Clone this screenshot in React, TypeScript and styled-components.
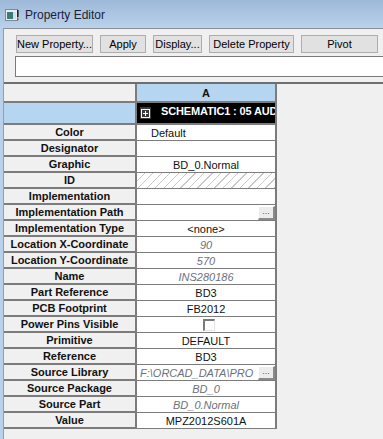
import React from "react";
import styled, { createGlobalStyle } from "styled-components";

const GlobalStyle = createGlobalStyle`
  html, body {
    margin: 0;
    padding: 0;
    background: #f0f0f0;
  }
  * {
    box-sizing: border-box;
  }
`;

type Kind = "left" | "center" | "italic" | "hatch" | "browse" | "check" | "path";

const rows: { label: string; value?: string; kind: Kind }[] = [
  { label: "Color", value: "Default", kind: "left" },
  { label: "Designator", kind: "center" },
  { label: "Graphic", value: "BD_0.Normal", kind: "center" },
  { label: "ID", kind: "hatch" },
  { label: "Implementation", kind: "center" },
  { label: "Implementation Path", kind: "browse" },
  { label: "Implementation Type", value: "<none>", kind: "center" },
  { label: "Location X-Coordinate", value: "90", kind: "italic" },
  { label: "Location Y-Coordinate", value: "570", kind: "italic" },
  { label: "Name", value: "INS280186", kind: "italic" },
  { label: "Part Reference", value: "BD3", kind: "center" },
  { label: "PCB Footprint", value: "FB2012", kind: "center" },
  { label: "Power Pins Visible", kind: "check" },
  { label: "Primitive", value: "DEFAULT", kind: "center" },
  { label: "Reference", value: "BD3", kind: "center" },
  { label: "Source Library", value: "F:\\ORCAD_DATA\\PRO", kind: "path" },
  { label: "Source Package", value: "BD_0", kind: "italic" },
  { label: "Source Part", value: "BD_0.Normal", kind: "italic" },
  { label: "Value", value: "MPZ2012S601A", kind: "center" },
];

const Window = styled.div`
  width: 383px;
  height: 439px;
  overflow: hidden;
  display: flex;
  flex-direction: column;
  background: #b9d1ea;
  font-family: "Liberation Sans", Arial, sans-serif;
`;

const TitleBar = styled.div`
  height: 28px;
  flex: none;
  display: flex;
  align-items: center;
  gap: 6px;
  padding: 1px 0 0 5px;
  background: linear-gradient(#9db9d8, #bad2ea);
`;

const Title = styled.span`
  font-size: 12px;
  color: #1b2238;
`;

const Frame = styled.div`
  flex: 1;
  margin-left: 3px;
  border-left: 1px solid #9c9c9c;
  border-top: 1px solid #8a8f96;
  background: #f0f0f0;
  display: flex;
  flex-direction: column;
  min-height: 0;
`;

const Toolbar = styled.div`
  display: flex;
  gap: 7px;
  padding: 6px 0 0 12px;
`;

const Button = styled.div<{ $w: number }>`
  width: ${(p) => p.$w}px;
  height: 18px;
  border: 1px solid #adadad;
  background: #e1e1e1;
  font-size: 11px;
  color: #000;
  display: flex;
  align-items: center;
  justify-content: center;
  white-space: nowrap;
`;

const Input = styled.div`
  margin: 3px 0 0 11px;
  width: 380px;
  height: 21px;
  flex: none;
  border: 1px solid #7a7a7a;
  background: #fff;
`;

const GridArea = styled.div`
  margin-top: 5px;
  border-top: 2px solid #6f6f6f;
  flex: 1;
`;

const Table = styled.div`
  display: grid;
  grid-template-columns: 133px 140px;
  width: max-content;
`;

const LabelCell = styled.div<{ $blue?: boolean; $h?: number }>`
  height: ${(p) => p.$h ?? 16}px;
  background: ${(p) => (p.$blue ? "#b5d5f1" : "#f0f0f0")};
  border-right: 2px solid #7c7c7c;
  border-bottom: 2px solid #7c7c7c;
  font-size: 11px;
  font-weight: bold;
  color: #111;
  display: flex;
  align-items: center;
  justify-content: center;
  white-space: nowrap;
`;

const HeaderCell = styled(LabelCell)`
  background: #b5d5f1;
`;

const ValueCell = styled.div<{ $align?: string; $italic?: boolean; $pad?: number }>`
  height: 16px;
  background: #fff;
  border-right: 2px solid #7c7c7c;
  border-bottom: 1px solid #7c7c7c;
  font-size: 11px;
  color: ${(p) => (p.$italic ? "#6c6f7c" : "#111")};
  font-style: ${(p) => (p.$italic ? "italic" : "normal")};
  display: flex;
  align-items: center;
  justify-content: ${(p) => p.$align ?? "center"};
  padding-left: ${(p) => p.$pad ?? 0}px;
  white-space: nowrap;
  overflow: hidden;
`;

const HatchCell = styled(ValueCell)`
  background: repeating-linear-gradient(135deg, #fff 0 5px, #c8c8c8 5px 6px);
`;

const PathText = styled.span`
  flex: 1;
  min-width: 0;
  overflow: hidden;
`;

const Browse = styled.div`
  width: 17px;
  height: 14px;
  margin-left: auto;
  flex: none;
  background: #ececec;
  border-top: 1px solid #fff;
  border-left: 1px solid #fff;
  border-right: 2px solid #8a8a8a;
  border-bottom: 2px solid #8a8a8a;
  font-size: 9px;
  font-style: normal;
  color: #555;
  display: flex;
  align-items: center;
  justify-content: center;
  line-height: 1;
  padding-bottom: 2px;
`;

const Check = styled.div`
  width: 12px;
  height: 12px;
  margin-left: 5px;
  border-top: 2px solid #7a7a7a;
  border-left: 2px solid #7a7a7a;
  border-right: 1px solid #e4e4e4;
  border-bottom: 1px solid #e4e4e4;
  background: #fff;
`;

const PartCell = styled.div`
  height: 22px;
  background: #000;
  border-right: 2px solid #7c7c7c;
  border-bottom: 2px solid #7c7c7c;
  display: flex;
  align-items: flex-start;
  gap: 10px;
  padding: 4px 0 0 3px;
  overflow: hidden;
  white-space: nowrap;
`;

const PartText = styled.span`
  color: #fff;
  font-weight: bold;
  font-size: 11px;
  letter-spacing: -0.15px;
  line-height: 1;
  margin-top: -1px;
`;

const PlusBox = styled.div`
  width: 11px;
  height: 12px;
  flex: none;
  background: #3a3a3a;
  display: flex;
  align-items: center;
  justify-content: center;
`;

function AppIcon() {
  return (
    <svg width="14" height="12" viewBox="0 0 14 12">
      <rect x="0.5" y="0.5" width="12" height="11" fill="#e8eef2" stroke="#7d8a93" />
      <rect x="2" y="3" width="6" height="7" fill="#3c7a78" />
      <rect x="8" y="3" width="3" height="7" fill="#cfe1ea" />
      <rect x="12" y="1" width="1.6" height="7" fill="#222" />
      <rect x="12" y="9.5" width="1.6" height="1.6" fill="#c03030" />
    </svg>
  );
}

function Plus() {
  return (
    <PlusBox>
      <svg width="9" height="9" viewBox="0 0 9 9">
        <rect x="0.5" y="0.5" width="8" height="8" fill="none" stroke="#fff" />
        <path d="M2 4.5h5M4.5 2v5" stroke="#fff" />
      </svg>
    </PlusBox>
  );
}

function Value({ row }: { row: (typeof rows)[number] }) {
  switch (row.kind) {
    case "left":
      return (
        <ValueCell $align="flex-start" $pad={14}>
          {row.value}
        </ValueCell>
      );
    case "italic":
      return <ValueCell $italic>{row.value}</ValueCell>;
    case "hatch":
      return <HatchCell />;
    case "browse":
      return (
        <ValueCell>
          <Browse>...</Browse>
        </ValueCell>
      );
    case "check":
      return (
        <ValueCell>
          <Check />
        </ValueCell>
      );
    case "path":
      return (
        <ValueCell $italic $align="flex-start" $pad={3}>
          <PathText>{row.value}</PathText>
          <Browse>...</Browse>
        </ValueCell>
      );
    default:
      return <ValueCell>{row.value}</ValueCell>;
  }
}

export default function App() {
  return (
    <>
      <GlobalStyle />
      <Window>
        <TitleBar>
          <AppIcon />
          <Title>Property Editor</Title>
        </TitleBar>
        <Frame>
          <Toolbar>
            <Button $w={77}>New Property...</Button>
            <Button $w={46}>Apply</Button>
            <Button $w={49}>Display...</Button>
            <Button $w={85}>Delete Property</Button>
            <Button $w={77}>Pivot</Button>
          </Toolbar>
          <Input />
          <GridArea>
            <Table>
              <LabelCell $h={19} />
              <HeaderCell $h={19}>A</HeaderCell>
              <LabelCell $h={22} $blue />
              <PartCell>
                <Plus />
                <PartText>SCHEMATIC1 : 05 AUD</PartText>
              </PartCell>
              {rows.map((r) => (
                <React.Fragment key={r.label}>
                  <LabelCell>{r.label}</LabelCell>
                  <Value row={r} />
                </React.Fragment>
              ))}
            </Table>
          </GridArea>
        </Frame>
      </Window>
    </>
  );
}
